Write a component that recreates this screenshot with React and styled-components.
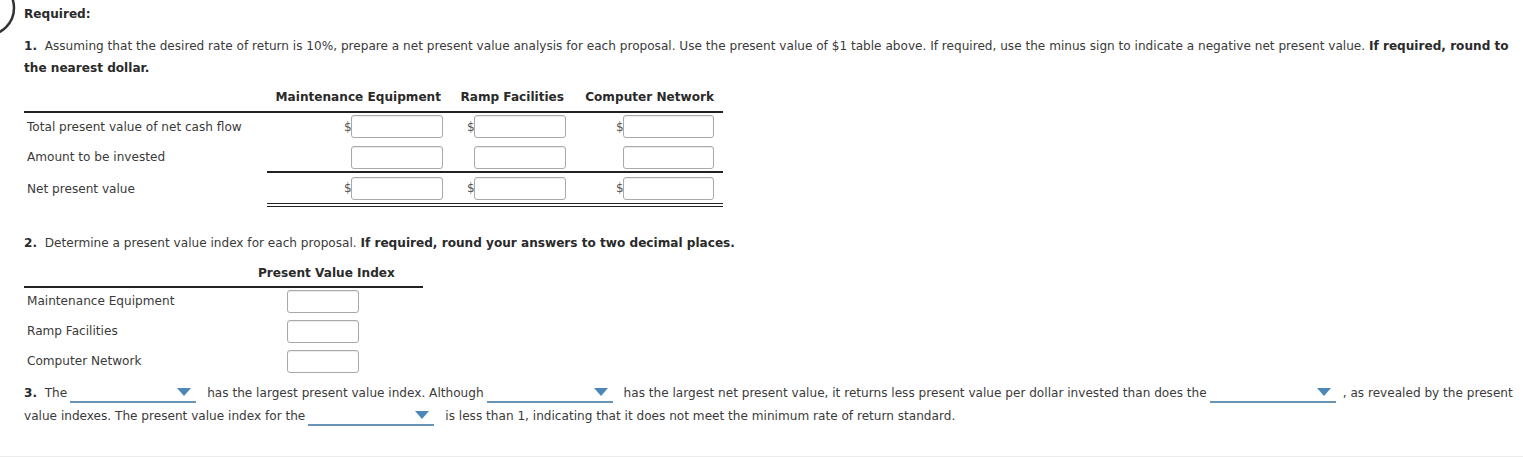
import React from 'react';
import styled, { createGlobalStyle } from 'styled-components';

const GlobalStyle = createGlobalStyle`
  html, body { margin: 0; padding: 0; background: #fff; }
  body {
    font-family: "DejaVu Sans", Verdana, sans-serif;
    font-size: 12.1px;
    color: #3a3a3a;
  }
`;

const Page = styled.div`
  position: relative;
  width: 1523px;
  height: 457px;
  box-sizing: border-box;
  padding: 3px 0 0 24px;
  border-bottom: 1px solid #ececec;
  overflow: hidden;
`;

// 위쪽 번호 원 조각
const Badge = styled.svg`
  position: absolute;
  left: 0;
  top: 0;
`;

const Title = styled.div`
  font-weight: bold;
  line-height: 22px;
  color: #2a2a2a;
  margin-bottom: 10px;
`;

const Para = styled.p`
  margin: 0;
  line-height: 22px;
  b { color: #2a2a2a; }
`;

const Table = styled.div`
  display: grid;
  grid-template-columns: ${p => p.cols};
  width: ${p => p.width}px;
  margin-top: ${p => p.top}px;
`;

const Head = styled.div`
  font-weight: bold;
  color: #2a2a2a;
  white-space: nowrap;
  text-align: ${p => p.align || 'right'};
  padding: 0 ${p => p.padR ?? 11}px ${p => p.padB ?? 6}px ${p => p.padL ?? 0}px;
  border-bottom: 2px solid #222;
  line-height: 16px;
  align-self: end;
`;

const Label = styled.div`
  display: flex;
  align-items: center;
  padding-left: 3px;
  box-sizing: border-box;
  height: ${p => p.h}px;
  padding-bottom: ${p => p.padB ?? 0}px;
`;

const Cell = styled.div`
  display: flex;
  align-items: center;
  justify-content: ${p => p.justify || 'flex-end'};
  padding: 0 ${p => p.padR ?? 9}px ${p => p.padB ?? 0}px ${p => p.padL ?? 0}px;
  height: ${p => p.h}px;
  box-sizing: border-box;
  border-bottom: ${p =>
    p.line === 'single' ? '2px solid #222' : p.line === 'double' ? '4px double #222' : 'none'};
`;

const Dollar = styled.span`
  width: 8px;
  font-size: 12px;
  color: #555;
  margin-right: -1px;
`;

const Box = styled.input`
  width: ${p => p.w}px;
  height: 23px;
  box-sizing: border-box;
  border: 1px solid #a9a9a9;
  border-radius: 3px;
  box-shadow: inset 0 1px 1px rgba(0, 0, 0, 0.08);
  background: #fff;
  margin: 0;
  padding: 0 4px;
  font: inherit;
`;

const Section = styled(Para)`
  margin-top: ${p => p.top}px;
  line-height: ${p => p.lh || 22}px;
`;

const Select = styled.span`
  display: inline-block;
  position: relative;
  width: 126px;
  height: 18px;
  vertical-align: -6px;
  margin: 0 ${p => p.right ?? 11}px 0 ${p => p.left ?? 3}px;
  border-bottom: 2px solid #6a93b6;
`;

const Caret = styled.span`
  position: absolute;
  right: 5px;
  top: 5px;
  width: 0;
  height: 0;
  border-left: 7px solid transparent;
  border-right: 7px solid transparent;
  border-top: 8px solid #4c87b8;
`;

const Dropdown = props => (
  <Select {...props}>
    <Caret />
  </Select>
);

const cols1 = '243px 185px 123px 148px';
const rows1 = [
  { label: 'Total present value of net cash flow', dollar: true, h: 30, padB: 3 },
  { label: 'Amount to be invested', dollar: false, h: 30, line: 'single', padB: 0 },
  { label: 'Net present value', dollar: true, h: 34, line: 'double', padB: 0 },
];

const widths = [92, 92, 91];

const proposals = ['Maintenance Equipment', 'Ramp Facilities', 'Computer Network'];

export default function App() {
  return (
    <Page>
      <GlobalStyle />
      <Badge width="20" height="40" viewBox="0 0 20 40">
        <circle cx="-13" cy="8" r="27" fill="none" stroke="#333" strokeWidth="2.5" />
      </Badge>
      <Title>Required:</Title>
      <Para>
        <b>1.</b>&nbsp; Assuming that the desired rate of return is 10%, prepare a net present value analysis for each
        proposal. Use the present value of $1 table above. If required, use the minus sign to indicate a negative net
        present value. <b>If required, round to the nearest dollar.</b>
      </Para>

      <Table cols={cols1} width={699} top={10}>
        <Head />
        <Head>Maintenance Equipment</Head>
        <Head>Ramp Facilities</Head>
        <Head padR={9}>Computer Network</Head>
        {rows1.map((row, i) => (
          <React.Fragment key={i}>
            <Label h={row.h} padB={row.line ? 2 : row.padB}>{row.label}</Label>
            {widths.map((w, j) => (
              <Cell key={j} h={row.h} line={row.line} padB={row.padB}>
                {row.dollar ? <Dollar>$</Dollar> : null}
                <Box w={w} />
              </Cell>
            ))}
          </React.Fragment>
        ))}
      </Table>

      <Section top={25}>
        <b>2.</b>&nbsp; Determine a present value index for each proposal. <b>If required, round your answers to two decimal places.</b>
      </Section>

      <Table cols="220px 179px" width={399} top={11}>
        <Head padB={5} />
        <Head align="left" padL={14} padR={0} padB={5}>Present Value Index</Head>
        {proposals.map(p => (
          <React.Fragment key={p}>
            <Label h={30} padB={4}>{p}</Label>
            <Cell h={30} justify="flex-start" padR={0} padL={43} padB={4}>
              <Box w={72} />
            </Cell>
          </React.Fragment>
        ))}
      </Table>

      <Section top={4} lh={23}>
        <b>3.</b>&nbsp; The
        <Dropdown left={3} />
        has the largest present value index. Although
        <Dropdown left={3} />
        has the largest net present value, it returns less present value per dollar invested than does the
        <Dropdown left={3} right={7} />
        , as revealed by the present value indexes. The present value index for the
        <Dropdown left={3} />
        is less than 1, indicating that it does not meet the minimum rate of return standard.
      </Section>
    </Page>
  );
}
